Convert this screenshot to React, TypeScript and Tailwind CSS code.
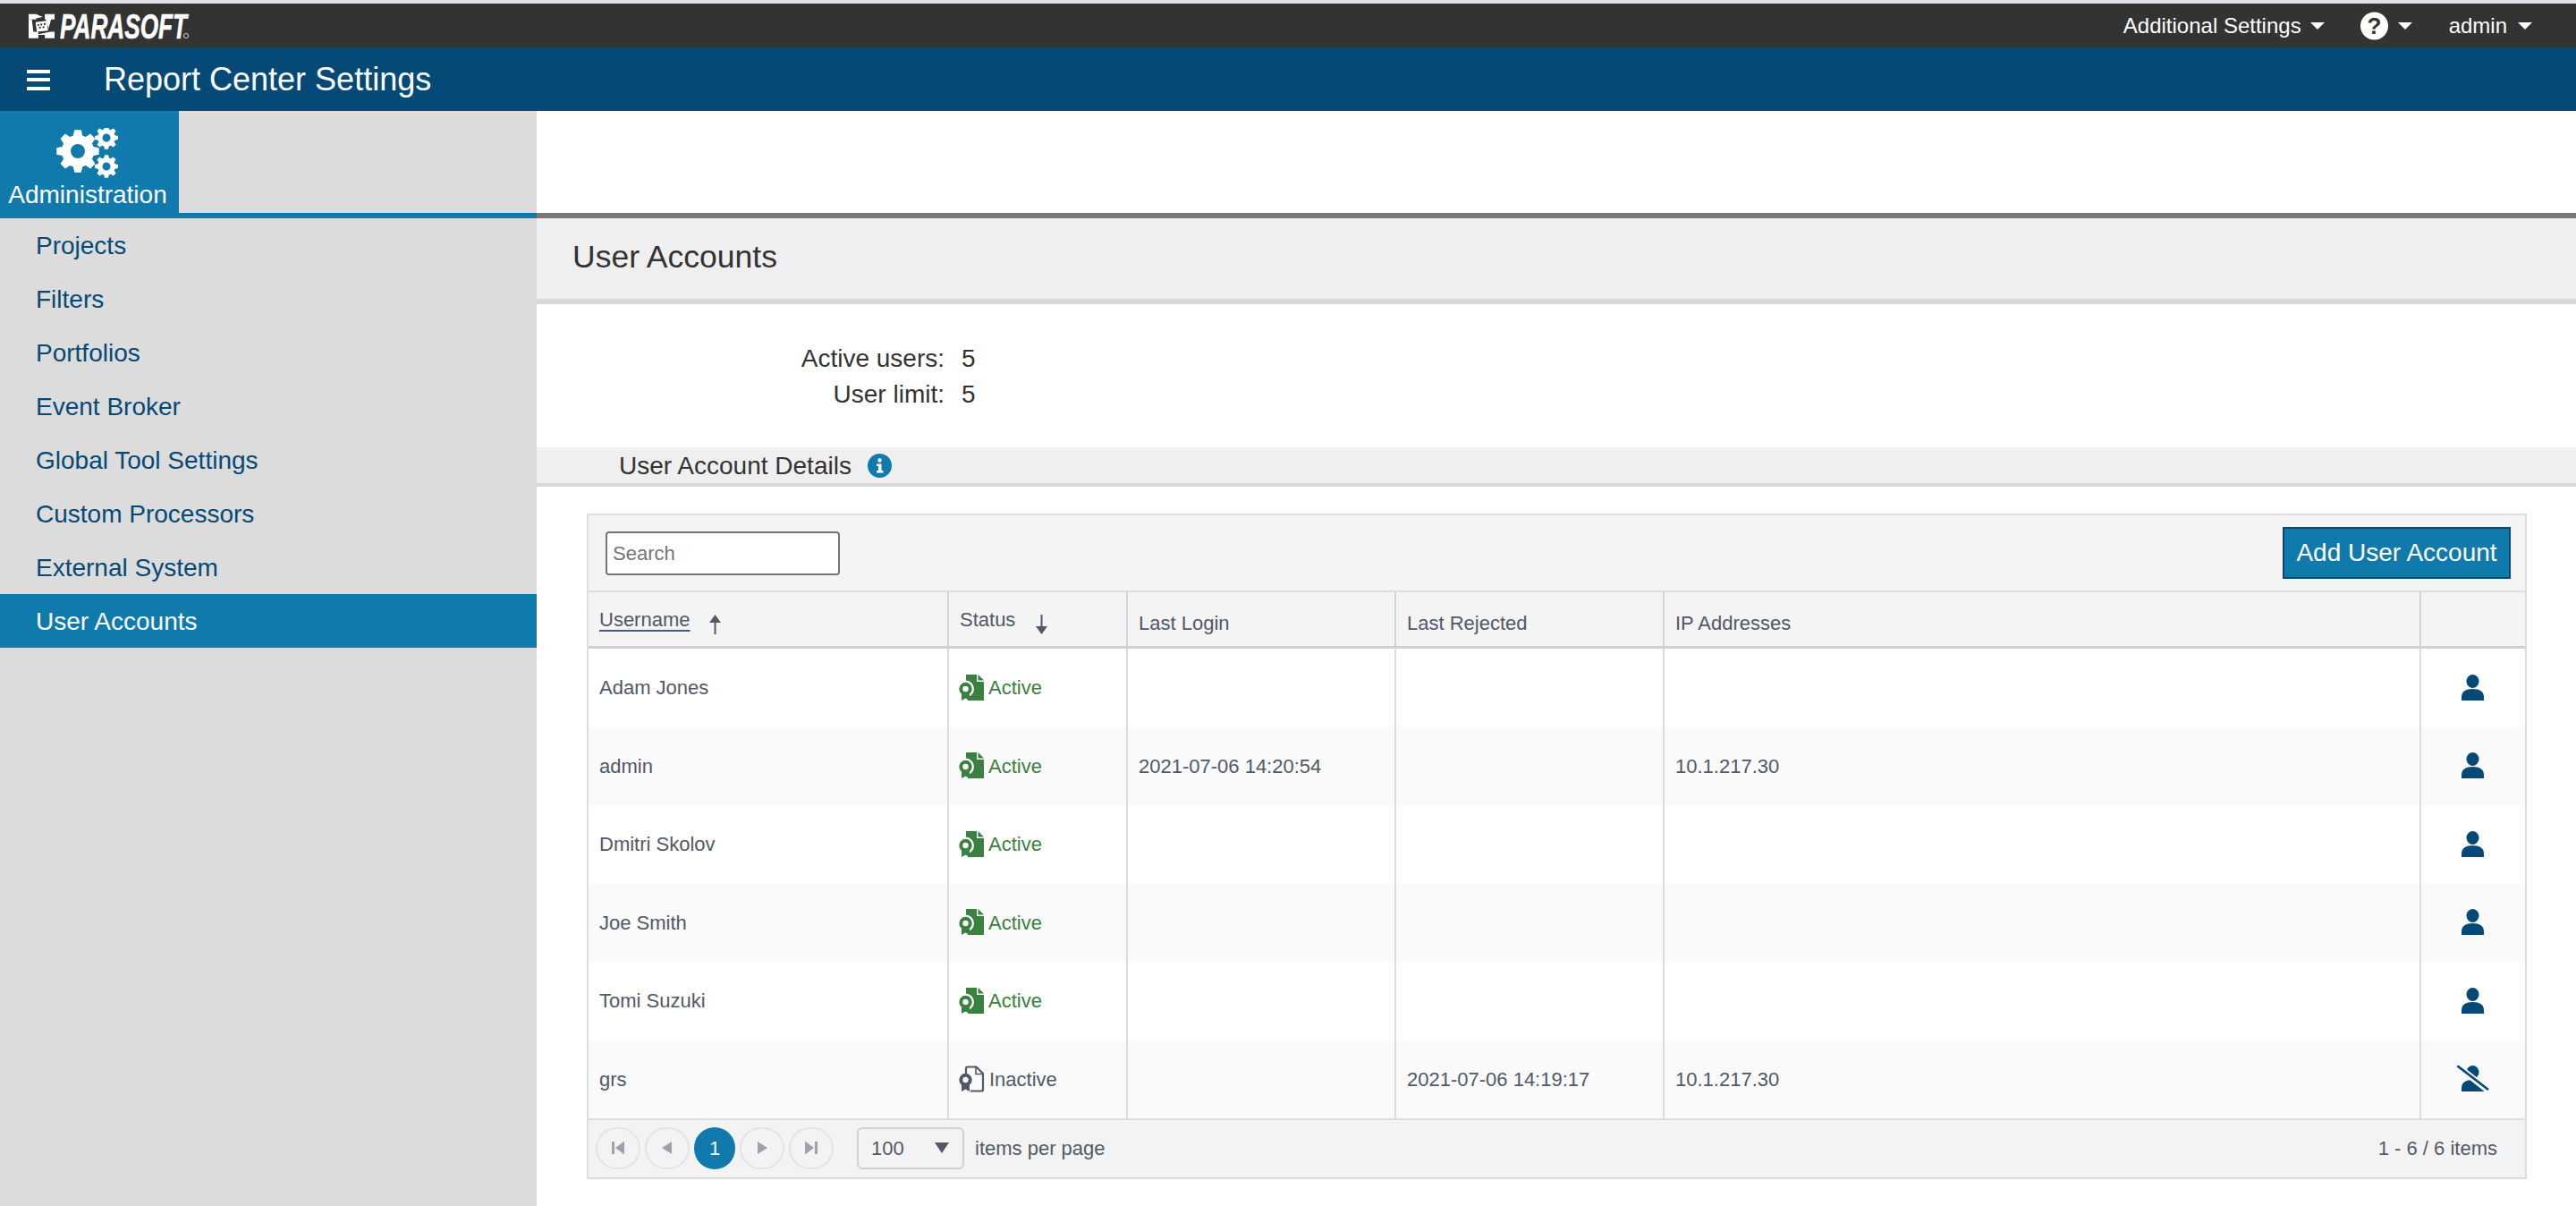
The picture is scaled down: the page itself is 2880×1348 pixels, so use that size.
import React from "react";

const gearPath = (cx: number, cy: number, r: number, hole: number, teeth: number) => {
  const root = r * 0.76;
  const pts: string[] = [];
  const step = (Math.PI * 2) / teeth;
  for (let i = 0; i < teeth; i++) {
    const a = i * step - Math.PI / 2;
    const list: [number, number][] = [
      [root, a - step * 0.36],
      [r, a - step * 0.2],
      [r, a + step * 0.2],
      [root, a + step * 0.36],
    ];
    list.forEach(([rad, ang]) => pts.push(`${(cx + rad * Math.cos(ang)).toFixed(2)} ${(cy + rad * Math.sin(ang)).toFixed(2)}`));
  }
  const ring = `M${cx - hole} ${cy}a${hole} ${hole} 0 1 0 ${hole * 2} 0a${hole} ${hole} 0 1 0 ${-hole * 2} 0Z`;
  return `M${pts.join("L")}Z${ring}`;
};

const Gears = () => (
  <svg width="70" height="56" viewBox="0 0 70 56" className="block">
    <path fillRule="evenodd" fill="#fff" d={gearPath(24, 26, 24, 8, 8)} />
    <path fillRule="evenodd" fill="#fff" d={gearPath(56, 11, 13, 4.5, 8)} />
    <path fillRule="evenodd" fill="#fff" d={gearPath(56, 43, 13, 4.5, 8)} />
  </svg>
);

const Logo = () => (
  <svg width="260" height="48" viewBox="0 0 260 48" className="block">
    <g transform="translate(0 9.5) scale(0.2417 0.2456)" fill="#fff">
      <path d="M0 5H35L65 18 35 24V30H0Z" />
      <path d="M75 5H120V30H104L92 70 80 30H75Z" />
      <path d="M120 115H75V100H30L90 88 98 85H120Z" />
      <path d="M0 115V30H15L22 85 45 85V115Z" />
      <path fillRule="evenodd" d="M32 42L84 36 90 80 38 86ZM48 50l-7 1 1 8 7-1ZM62 48l-8 1 1 8 8-1ZM78 46l-8 1 1 8 8-1ZM56 62l-8 1 1 8 8-1ZM72 60l-8 1 1 8 8-1Z" />
    </g>
    <text
      x="35"
      y="38"
      textLength="142"
      lengthAdjust="spacingAndGlyphs"
      fill="#fff"
      fontFamily="'Liberation Sans', Arial, sans-serif"
      fontWeight="700"
      fontStyle="italic"
      fontSize="39"
      stroke="#fff"
      strokeWidth="0.6"
    >
      PARASOFT
    </text>
    <circle cx="176" cy="35" r="2.6" fill="none" stroke="#ddd" strokeWidth="0.9" />
  </svg>
);

const Caret = () => (
  <svg width="16" height="8" viewBox="0 0 16 8" className="block">
    <path d="M0 0H16L8 8Z" fill="#fff" />
  </svg>
);

const HelpIcon = () => (
  <svg width="31" height="32" viewBox="0 0 31 32" className="block">
    <circle cx="15.5" cy="16" r="15.5" fill="#fff" />
    <text
      x="15.5"
      y="25"
      textAnchor="middle"
      fontSize="26"
      fontWeight="700"
      fontFamily="'Liberation Sans', Arial, sans-serif"
      fill="#333"
    >
      ?
    </text>
  </svg>
);

const InfoIcon = () => (
  <svg width="27" height="27" viewBox="0 0 27 27" className="block">
    <circle cx="13.5" cy="13.5" r="13.5" fill="#117aac" />
    <circle cx="13.5" cy="7.5" r="2.2" fill="#fff" />
    <path d="M10 11.5H15.5V19H17.5V21.5H10V19H12V14H10Z" fill="#fff" />
  </svg>
);

const Cert = ({ active }: { active: boolean }) => {
  const c = active ? "#3a8040" : "#515967";
  return (
    <svg width="29" height="30" viewBox="0 0 29 30" className="block shrink-0">
      {active ? (
        <>
          <path d="M8 0H20V8H28V29H10V24L14 22V12L8 8Z" fill={c} />
          <path d="M21.5 0L28 6.5H21.5Z" fill={c} />
        </>
      ) : (
        <path d="M8 9V3Q8 1.5 10 1.5H19.5L27 9V27Q27 28.5 25 28.5H13" fill="none" stroke={c} strokeWidth="2.2" />
      )}
      {!active && <path d="M19 2V9.5H26.5" fill="none" stroke={c} strokeWidth="1.6" />}
      {active && <circle cx="7.5" cy="16" r="9.5" fill="#fff" />}
      <circle cx="7.5" cy="16" r="5.2" fill="none" stroke={c} strokeWidth="4" />
      <path d="M3 21L3 29L7.5 26.5L12 29V21Z" fill={c} />
    </svg>
  );
};

const UserIcon = ({ off }: { off?: boolean }) => (
  <svg width="36" height="30" viewBox="0 0 36 30" className="block">
    <ellipse cx="17.5" cy="7.5" rx="7" ry="7.5" fill="#054a76" />
    <path d="M5 29Q5 27 5 25C5 19 10 16 17.5 16S30 19 30 25V29Z" fill="#054a76" />
    {off && (
      <>
        <path d="M1 1L35 28" stroke="#fafafa" strokeWidth="7" />
        <path d="M0 0L35 27" stroke="#054a76" strokeWidth="2.6" />
      </>
    )}
  </svg>
);

const SortArrow = ({ up }: { up?: boolean }) => (
  <svg width="13" height="22" viewBox="0 0 13 22" className="block">
    {up ? (
      <path d="M6.5 0L13 9H7.5V22H5.5V9H0Z" fill="#515967" />
    ) : (
      <path d="M6.5 22L13 13H7.5V0H5.5V13H0Z" fill="#515967" />
    )}
  </svg>
);

const PageBtn = ({ d }: { d: string }) => (
  <div className="flex h-[47px] w-[50px] items-center justify-center rounded-full border-2 border-[#e4e4e4]">
    <svg width="16" height="16" viewBox="0 0 16 16" className="block">
      <path d={d} fill="#9ea2aa" />
    </svg>
  </div>
);

const nav = [
  "Projects",
  "Filters",
  "Portfolios",
  "Event Broker",
  "Global Tool Settings",
  "Custom Processors",
  "External System",
  "User Accounts",
];

const rows = [
  { name: "Adam Jones", active: true, login: "", rejected: "", ip: "" },
  { name: "admin", active: true, login: "2021-07-06 14:20:54", rejected: "", ip: "10.1.217.30" },
  { name: "Dmitri Skolov", active: true, login: "", rejected: "", ip: "" },
  { name: "Joe Smith", active: true, login: "", rejected: "", ip: "" },
  { name: "Tomi Suzuki", active: true, login: "", rejected: "", ip: "" },
  { name: "grs", active: false, login: "", rejected: "2021-07-06 14:19:17", ip: "10.1.217.30" },
];

const cols = "grid grid-cols-[401px_200px_300px_300px_846px_118px]";

export default function App() {
  return (
    <div className="flex h-[1348px] flex-col overflow-hidden bg-white font-['Liberation_Sans',Arial,sans-serif]">
      <div className="h-[4px] bg-[#e0e0e6]" />
      <header className="flex h-[50px] items-center justify-between bg-[#333333] pr-[49px] pl-[32px] text-[24px] text-white">
        <Logo />
        <div className="flex items-center">
          <span>Additional Settings</span>
          <span className="mr-[40px] ml-[10px]"><Caret /></span>
          <HelpIcon />
          <span className="mr-[41px] ml-[11px]"><Caret /></span>
          <span>admin</span>
          <span className="ml-[12px]"><Caret /></span>
        </div>
      </header>
      <div className="flex h-[70px] items-center bg-[#054a76] pl-[30px] text-white">
        <div className="flex w-[26px] flex-col gap-[5.5px]">
          <div className="h-[4px] bg-white" />
          <div className="h-[4px] bg-white" />
          <div className="h-[4px] bg-white" />
        </div>
        <h1 className="ml-[60px] text-[36px] leading-none">Report Center Settings</h1>
      </div>
      <div className="flex min-h-0 flex-1">
        <aside className="w-[600px] shrink-0 bg-[#dcdcdc]">
          <div className="h-[120px] border-b-[6px] border-[#117aac]">
            <div className="flex h-[114px] w-[200px] flex-col items-center bg-[#117aac] pt-[19px] text-white">
              <div className="-translate-x-[2px]"><Gears /></div>
              <div className="mt-[3px] -translate-x-[2px] text-[28px] leading-[32px]">Administration</div>
            </div>
          </div>
          <nav>
            {nav.map((n, i) => (
              <div
                key={n}
                className={`flex h-[60px] items-center pt-[2px] pl-[40px] text-[28px] ${
                  i === nav.length - 1 ? "bg-[#117aac] text-white" : "text-[#054a76]"
                }`}
              >
                {n}
              </div>
            ))}
          </nav>
        </aside>
        <main className="min-w-0 flex-1">
          <div className="h-[120px] border-b-[6px] border-[#777777]" />
          <div className="flex h-[96px] items-center border-b-[6px] border-[#d9d9d9] bg-[#efefef] pb-[2px] pl-[40px] text-[35.5px] text-[#333333]">
            User Accounts
          </div>
          <div className="grid h-[160px] grid-cols-[456px_1fr] content-start gap-x-[19px] pt-[41px] text-[28px] leading-[40px] text-[#333333]">
            <div className="text-right">Active users:</div>
            <div>5</div>
            <div className="text-right">User limit:</div>
            <div>5</div>
          </div>
          <div className="flex h-[44px] items-center gap-[18px] border-b-[4px] border-[#d9d9d9] bg-[#efefef] pt-[1px] pl-[92px] text-[28px] text-[#333333]">
            <span>User Account Details</span>
            <InfoIcon />
          </div>
          <section className="mt-[30px] mr-[55px] ml-[56px] border-2 border-[#dddddd] bg-white text-[22px] text-[#515967]">
            <div className="flex h-[86px] items-center justify-between border-b-2 border-[#dddddd] bg-[#f4f4f4] pr-[16px] pl-[19px]">
              <input
                placeholder="Search"
                className="h-[49px] w-[262px] rounded-[4px] border-2 border-[#757575] bg-white px-[6px] pt-[1px] text-[22px] placeholder:text-[#757575]"
              />
              <button className="h-[58px] w-[255px] border-2 border-[#054a76] bg-[#117aac] text-[28px] text-white">
                Add User Account
              </button>
            </div>
            <div className={`${cols} h-[63px] border-b-[3px] border-[#cfcfd6] bg-[#f4f4f4]`}>
              <div className="flex items-center pt-[1px] pl-[12px]">
                <span className="underline underline-offset-[4px]">Username</span>
                <span className="mt-[11px] ml-[22px]"><SortArrow up /></span>
              </div>
              <div className="flex items-center border-l-2 border-[#d3d3d9] pt-[1px] pl-[12px]">
                <span>Status</span>
                <span className="mt-[11px] ml-[23px]"><SortArrow /></span>
              </div>
              <div className="flex items-center border-l-2 border-[#d3d3d9] pt-[9px] pl-[12px]">Last Login</div>
              <div className="flex items-center border-l-2 border-[#d3d3d9] pt-[9px] pl-[12px]">Last Rejected</div>
              <div className="flex items-center border-l-2 border-[#d3d3d9] pt-[9px] pl-[12px]">IP Addresses</div>
              <div className="border-l-2 border-[#d3d3d9]" />
            </div>
            {rows.map((r, i) => (
              <div key={r.name} className={`${cols} h-[87.5px] ${i % 2 === 1 ? "bg-[#fafafa]" : "bg-white"}`}>
                <div className="flex items-center pl-[12px]">{r.name}</div>
                <div
                  className={`flex items-center border-l-2 border-[#dddddd] pl-[11px] ${
                    r.active ? "gap-[4px] text-[#3a8040]" : "gap-[5px] text-[#515967]"
                  }`}
                >
                  <Cert active={r.active} />
                  {r.active ? "Active" : "Inactive"}
                </div>
                <div className="flex items-center border-l-2 border-[#dddddd] pl-[12px]">{r.login}</div>
                <div className="flex items-center border-l-2 border-[#dddddd] pl-[12px]">{r.rejected}</div>
                <div className="flex items-center border-l-2 border-[#dddddd] pl-[12px]">{r.ip}</div>
                <div className="flex items-center justify-center border-l-2 border-[#dddddd] pr-[1px]">
                  <UserIcon off={!r.active} />
                </div>
              </div>
            ))}
            <div className="flex h-[66px] items-center justify-between border-t-2 border-[#dddddd] bg-[#f3f3f3] pr-[31px] pb-[2px] pl-[8px]">
              <div className="flex items-center">
                <div className="flex items-center gap-[5px]">
                  <PageBtn d="M1 1H4V15H1ZM15 0.5V15.5L5 8Z" />
                  <PageBtn d="M13 1V15L2 8Z" />
                  <div className="flex h-[47px] w-[46px] items-center justify-center rounded-full bg-[#117aac] text-[22px] text-white">
                    1
                  </div>
                  <PageBtn d="M3 1V15L14 8Z" />
                  <PageBtn d="M1 0.5V15.5L11 8ZM12 1H15V15H12Z" />
                </div>
                <div className="ml-[26px] flex h-[47px] w-[120px] items-center justify-between rounded-[6px] border-2 border-[#cfcfd6] pr-[15px] pl-[14px]">
                  <span>100</span>
                  <svg width="16" height="12" viewBox="0 0 16 12" className="block">
                    <path d="M0 0H16L8 12Z" fill="#515967" />
                  </svg>
                </div>
                <span className="ml-[12px]">items per page</span>
              </div>
              <span>1 - 6 / 6 items</span>
            </div>
          </section>
        </main>
      </div>
    </div>
  );
}
